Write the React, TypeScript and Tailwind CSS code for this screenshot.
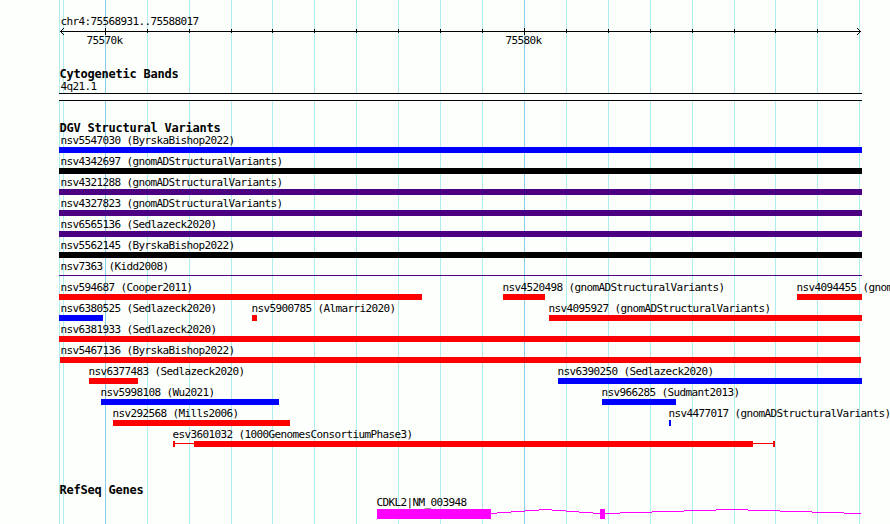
type Feature = {
  label: string;
  start: number;
  end: number;
  color: string;
  kind?: "line" | "range";
  thick?: [number, number];
};

// Panel coordinates, in pixels
const LEFT = 59;
const RIGHT = 862;
const MAJOR = [105, 524];
const MINOR = [147, 189, 231, 272, 314, 356, 398, 440, 482, 566, 608, 650, 692, 734, 775, 817];
const EDGES = [59, 63, 859];

const RED = "bg-[#ff0000]";
const BLUE = "bg-[#0000ff]";
const BLACK = "bg-black";
const INDIGO = "bg-[#4b0082]";

const rows: Feature[][] = [
  [{ label: "nsv5547030 (ByrskaBishop2022)", start: 59, end: 862, color: BLUE }],
  [{ label: "nsv4342697 (gnomADStructuralVariants)", start: 59, end: 862, color: BLACK }],
  [{ label: "nsv4321288 (gnomADStructuralVariants)", start: 59, end: 862, color: INDIGO }],
  [{ label: "nsv4327823 (gnomADStructuralVariants)", start: 59, end: 862, color: INDIGO }],
  [{ label: "nsv6565136 (Sedlazeck2020)", start: 59, end: 862, color: INDIGO }],
  [{ label: "nsv5562145 (ByrskaBishop2022)", start: 59, end: 862, color: BLACK }],
  [{ label: "nsv7363 (Kidd2008)", start: 59, end: 862, color: INDIGO, kind: "line" }],
  [
    { label: "nsv594687 (Cooper2011)", start: 59, end: 422, color: RED },
    { label: "nsv4520498 (gnomADStructuralVariants)", start: 503, end: 545, color: RED },
    { label: "nsv4094455 (gnomADStructuralVariants)", start: 797, end: 862, color: RED },
  ],
  [
    { label: "nsv6380525 (Sedlazeck2020)", start: 59, end: 103, color: BLUE },
    { label: "nsv5900785 (Almarri2020)", start: 252, end: 257, color: RED },
    { label: "nsv4095927 (gnomADStructuralVariants)", start: 549, end: 862, color: RED },
  ],
  [{ label: "nsv6381933 (Sedlazeck2020)", start: 59, end: 860, color: RED }],
  [{ label: "nsv5467136 (ByrskaBishop2022)", start: 60, end: 861, color: RED }],
  [
    { label: "nsv6377483 (Sedlazeck2020)", start: 89, end: 138, color: RED },
    { label: "nsv6390250 (Sedlazeck2020)", start: 558, end: 862, color: BLUE },
  ],
  [
    { label: "nsv5998108 (Wu2021)", start: 101, end: 279, color: BLUE },
    { label: "nsv966285 (Sudmant2013)", start: 602, end: 676, color: BLUE },
  ],
  [
    { label: "nsv292568 (Mills2006)", start: 113, end: 290, color: RED },
    { label: "nsv4477017 (gnomADStructuralVariants)", start: 669, end: 671, color: BLUE },
  ],
  [
    {
      label: "esv3601032 (1000GenomesConsortiumPhase3)",
      start: 173,
      end: 775,
      color: RED,
      kind: "range",
      thick: [194, 753],
    },
  ],
];

// Stepped intron connectors: x, width, y inside the gene glyph
const introns = [
  [491, 6, 4], [497, 14, 3], [511, 14, 2], [525, 14, 1], [539, 13, 0],
  [552, 14, 1], [566, 13, 2], [579, 14, 3], [593, 7, 4],
  [605, 15, 4], [620, 32, 3], [652, 32, 2], [684, 32, 1], [716, 32, 0],
  [748, 32, 1], [780, 32, 2], [812, 32, 3], [844, 17, 4],
];

function Gridlines() {
  return (
    <svg className="absolute inset-0" width="890" height="524" shapeRendering="crispEdges">
      {[...EDGES, ...MINOR].map((x) => (
        <rect key={x} x={x} y="0" width="1" height="524" fill="#afeeee" />
      ))}
      {MAJOR.map((x) => (
        <rect key={x} x={x} y="0" width="1" height="524" fill="#87ceeb" />
      ))}
    </svg>
  );
}

function Ruler() {
  return (
    <svg className="block" width="890" height="7" shapeRendering="crispEdges">
      <rect x="60" y="3" width="801" height="1" />
      {[0, 1, 2, 3].map((i) => (
        <g key={i}>
          <rect x={60 + i} y={3 - i} width="1" height="1" />
          <rect x={60 + i} y={3 + i} width="1" height="1" />
          <rect x={860 - i} y={3 - i} width="1" height="1" />
          <rect x={860 - i} y={3 + i} width="1" height="1" />
        </g>
      ))}
      {MINOR.map((x) => (
        <rect key={x} x={x} y="1" width="1" height="4" />
      ))}
      {MAJOR.map((x) => (
        <rect key={x} x={x} y="0" width="1" height="7" />
      ))}
    </svg>
  );
}

function Heading({ children }: { children: string }) {
  return (
    <h2 className="pl-[59.5px] h-[11px] text-[12px] leading-[14px] font-bold tracking-[-0.224px] whitespace-pre">
      {children}
    </h2>
  );
}

function Glyph({ feature }: { feature: Feature }) {
  const { color, kind, start, end, thick } = feature;

  if (kind === "line") {
    return (
      <div className="h-1.5 pt-0.5">
        <div className={`h-px ${color}`} />
      </div>
    );
  }
  if (kind === "range" && thick) {
    return (
      <div className="flex h-1.5">
        <div className={`w-0.5 ${color}`} />
        <div className={`h-px mt-0.5 ${color}`} style={{ width: thick[0] - start - 2 }} />
        <div className={color} style={{ width: thick[1] - thick[0] }} />
        <div className={`h-px mt-0.5 ${color}`} style={{ width: end - 2 - thick[1] }} />
        <div className={`w-0.5 ${color}`} />
      </div>
    );
  }
  return <div className={`h-1.5 ${color}`} />;
}

function TrackRow({ features }: { features: Feature[] }) {
  return (
    <div className="flex h-[21px]">
      {features.map((f, i) => {
        const prev = i === 0 ? 0 : features[i - 1].end;
        const nudge = Math.max(f.start - 0.5, LEFT + 1.5) - f.start;
        return (
          <div key={f.label} className="shrink-0" style={{ marginLeft: f.start - prev, width: f.end - f.start }}>
            <div className="h-[15px] leading-[17px] w-0 whitespace-pre" style={{ marginLeft: nudge }}>
              {f.label}
            </div>
            <Glyph feature={f} />
          </div>
        );
      })}
    </div>
  );
}

export default function App() {
  return (
    <div className="relative w-[890px] h-[524px] overflow-hidden bg-[#fdfffc] text-black font-['DejaVu_Sans_Mono',monospace] text-[11px] tracking-[-0.622px]">
      <Gridlines />

      <div className="relative flex flex-col">
        <div className="mt-[13px] h-[15px] pl-[60.5px] leading-[17px]">chr4:75568931..75588017</div>
        <Ruler />
        <div className="flex h-[11px] leading-[11px] pl-[86.5px]">
          <span className="w-[419px]">75570k</span>
          <span>75580k</span>
        </div>

        <section className="mt-[21px]">
          <Heading>Cytogenetic Bands</Heading>
          <div className="mt-[3px] h-3 pl-[60.5px] leading-[11px]">4q21.1</div>
          <div className="ml-[59px] h-2 border-y border-black bg-white" style={{ width: RIGHT - LEFT }} />
        </section>

        <section className="mt-5">
          <Heading>DGV Structural Variants</Heading>
          {rows.map((features) => (
            <TrackRow key={features[0].label} features={features} />
          ))}
        </section>

        <section className="mt-9">
          <Heading>RefSeq Genes</Heading>
          <div className="h-[15px] pl-[376.5px] leading-[17px]">CDKL2|NM_003948</div>
          <svg className="block" width="890" height="10" fill="#ff00ff" shapeRendering="crispEdges">
            <rect x="377" y="0" width="114" height="10" />
            <rect x="600" y="0" width="5" height="10" />
            {introns.map(([x, w, y]) => (
              <rect key={x} x={x} y={y} width={w} height="1" />
            ))}
          </svg>
        </section>
      </div>
    </div>
  );
}
